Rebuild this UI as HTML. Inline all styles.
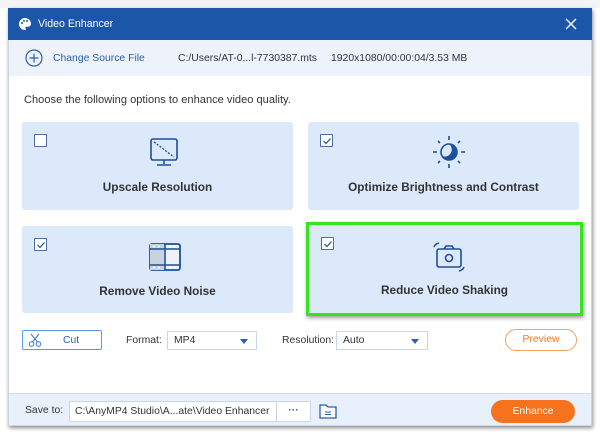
<!DOCTYPE html>
<html><head><style>
*{margin:0;padding:0;box-sizing:border-box}
body{width:600px;height:438px;background:#fff;font-family:"Liberation Sans",sans-serif;position:relative;overflow:hidden;font-size:10.4px;color:#333}
.a{position:absolute;white-space:nowrap}
.dlg{left:8px;top:8px;width:584px;height:418px;background:#fff;box-shadow:1px 2px 4px rgba(0,0,0,.45);border:1px solid #c8d4e4}
.card{position:absolute;width:271px;height:88px;background:#dce9fa;border-radius:3px}
.card .t{position:absolute;left:0;right:0;top:58px;text-align:center;font-weight:bold;font-size:11.8px;color:#333}
.cb{position:absolute;left:12px;top:12px;width:13px;height:13px;border:1px solid #4a6fa5;background:#fff;border-radius:1px}
.sel{position:absolute;height:19px;border:1px solid #c9d6e8;background:#fff;padding:3px 6px;font-size:10.4px;white-space:nowrap;overflow:hidden}
.tri{position:absolute;right:8px;top:7px;border-left:4px solid transparent;border-right:4px solid transparent;border-top:5px solid #2a5fb0}
</style></head><body>
<div class="a" style="left:0;top:0;width:600px;height:8px;background:#f4f4f4"></div>
<div class="a dlg"></div>
<div class="a" style="left:8px;top:8px;width:584px;height:32px;background:#1c56a8"></div>
<svg class="a" style="left:18px;top:17px" width="14" height="14" viewBox="0 0 14 14"><path d="M7 1a6 6 0 1 0 0 12c1 0 1-1 .5-1.7-.5-.7 0-1.5 1-1.5H10a3 3 0 0 0 3-3C13 3.5 10.3 1 7 1z" fill="#fff"/><circle cx="4" cy="6" r="1" fill="#1c56a8"/><circle cx="6" cy="3.8" r="1" fill="#1c56a8"/><circle cx="9" cy="4" r="1" fill="#1c56a8"/></svg>
<div class="a" style="left:38px;top:18px;color:#fff;font-size:10.6px">Video Enhancer</div>
<svg class="a" style="left:565px;top:18px" width="12" height="12"><path d="M1 1L11 11M11 1L1 11" stroke="#fff" stroke-width="1.3"/></svg>
<div class="a" style="left:9px;top:40px;width:582px;height:36px;background:#eef3fb"></div>
<svg class="a" style="left:25px;top:49px" width="18" height="18"><circle cx="9" cy="9" r="8" fill="none" stroke="#2a5fb0" stroke-width="1.2"/><path d="M9 4.5v9M4.5 9h9" stroke="#2a5fb0" stroke-width="1.2"/></svg>
<div class="a" style="left:53px;top:53px;color:#2a5fb0">Change Source File</div>
<div class="a" style="left:178px;top:53px">C:/Users/AT-0...l-7730387.mts</div>
<div class="a" style="left:331px;top:53px">1920x1080/00:00:04/3.53 MB</div>
<div class="a" style="left:24px;top:94px;font-size:11.1px">Choose the following options to enhance video quality.</div>

<div class="card" style="left:22px;top:122px"><div class="cb"></div>
<svg class="a" style="left:126px;top:14px" width="32" height="32" viewBox="0 0 32 32"><rect x="3" y="3" width="26" height="21" rx="2" fill="none" stroke="#1c4f9c" stroke-width="1.6"/><path d="M6 6l20 15" stroke="#1c4f9c" stroke-width="1.3" stroke-dasharray="2 1.5"/><path d="M16 24v4M9 29h14" stroke="#1c4f9c" stroke-width="1.6"/></svg>
<div class="t">Upscale Resolution</div></div>

<div class="card" style="left:308px;top:122px"><div class="cb"></div><svg class="a" style="left:13px;top:13px" width="12" height="12"><path d="M2.5 6l2.5 2.5 4.5-5" stroke="#1c4f9c" stroke-width="1.2" fill="none"/></svg>
<svg class="a" style="left:123px;top:12px" width="36" height="36" viewBox="0 0 36 36"><circle cx="18" cy="18" r="8" fill="none" stroke="#1c4f9c" stroke-width="1.6"/><path d="M18 10a8 8 0 0 1 0 16a8 8 0 0 1-7-4a7 7 0 0 0 7-12z" fill="#1c4f9c"/><path d="M18 2v4M18 30v4M2 18h4M30 18h4M7 7l2 2M27 27l2 2M29 7l-2 2M9 27l-2 2" stroke="#1c4f9c" stroke-width="1.6"/></svg>
<div class="t">Optimize Brightness and Contrast</div></div>

<div class="card" style="left:22px;top:226px;height:87px"><div class="cb"></div><svg class="a" style="left:13px;top:13px" width="12" height="12"><path d="M2.5 6l2.5 2.5 4.5-5" stroke="#1c4f9c" stroke-width="1.2" fill="none"/></svg>
<svg class="a" style="left:126px;top:16px" width="34" height="30" viewBox="0 0 34 30"><rect x="2" y="2" width="30" height="26" rx="2" fill="#eef2f7" stroke="#1c4f9c" stroke-width="1.8"/><rect x="2" y="2" width="14" height="26" fill="#c9d3e0"/><path d="M2 7h30M2 23h30M17 2v26" stroke="#1c4f9c" stroke-width="1.6"/><path d="M5 4.5h2M10 4.5h2M21 4.5h2M26 4.5h2M5 25.5h2M10 25.5h2M21 25.5h2M26 25.5h2" stroke="#fff" stroke-width="1.5"/></svg>
<div class="t">Remove Video Noise</div></div>

<div class="a" style="left:306px;top:222px;width:277px;height:94px;border:3px solid #33e61c;box-shadow:1px 2px 4px rgba(0,0,0,.4)"></div>
<div class="card" style="left:309px;top:225px;height:88px;width:271px"><div class="cb"></div><svg class="a" style="left:13px;top:13px" width="12" height="12"><path d="M2.5 6l2.5 2.5 4.5-5" stroke="#1c4f9c" stroke-width="1.2" fill="none"/></svg>
<svg class="a" style="left:123px;top:16px" width="34" height="32" viewBox="0 0 34 32"><rect x="5" y="8" width="24" height="18" rx="2" fill="none" stroke="#1c4f9c" stroke-width="1.6"/><path d="M12 8l2-3h6l2 3" fill="none" stroke="#1c4f9c" stroke-width="1.6"/><circle cx="17" cy="17" r="3.5" fill="none" stroke="#1c4f9c" stroke-width="1.6"/><path d="M2 6q1-3 5-4M32 26q-1 3-5 4" fill="none" stroke="#1c4f9c" stroke-width="1.5"/></svg>
<div class="t">Reduce Video Shaking</div></div>

<div class="a" style="left:22px;top:330px;width:80px;height:20px;border:1px solid #5b9be0;border-radius:2px"></div>
<svg class="a" style="left:28px;top:333px" width="14" height="14"><circle cx="3.5" cy="11" r="2.3" fill="none" stroke="#3a7bd0"/><circle cx="10.5" cy="11" r="2.3" fill="none" stroke="#3a7bd0"/><path d="M4.5 9L11 1M9.5 9L3 1" stroke="#3a7bd0"/></svg>
<div class="a" style="left:63px;top:335px;color:#2a5fb0">Cut</div>
<div class="a" style="left:126px;top:335px">Format:</div>
<div class="sel" style="left:167px;top:331px;width:90px">MP4<div class="tri"></div></div>
<div class="a" style="left:282px;top:335px">Resolution:</div>
<div class="sel" style="left:336px;top:331px;width:92px">Auto<div class="tri"></div></div>
<div class="a" style="left:505px;top:329px;width:72px;height:22px;border:1px solid #f5a05e;border-radius:11px;color:#f07a22;text-align:center;line-height:20px">Preview</div>

<div class="a" style="left:9px;top:393px;width:582px;height:32px;background:#e8f0fb;border-top:1px solid #cfdcef"></div>
<div class="a" style="left:25px;top:405px">Save to:</div>
<div class="sel" style="left:69px;top:401px;width:208px;height:21px;padding:4px 5px">C:\AnyMP4 Studio\A...ate\Video Enhancer</div>
<div class="sel" style="left:276px;top:401px;width:35px;height:21px;text-align:center;padding:3px 0;color:#2a5fb0;font-weight:bold">···</div>
<svg class="a" style="left:319px;top:403px" width="18" height="16"><path d="M1 2h6l2 2h8v11H1z" fill="#fff" stroke="#2a5fb0" stroke-width="1.3"/><path d="M6 9h6M6 11.5h6" stroke="#2a5fb0"/></svg>
<div class="a" style="left:491px;top:400px;width:84px;height:23px;background:#f6721d;border-radius:12px;color:#fff;text-align:center;line-height:23px">Enhance</div>
</body></html>
